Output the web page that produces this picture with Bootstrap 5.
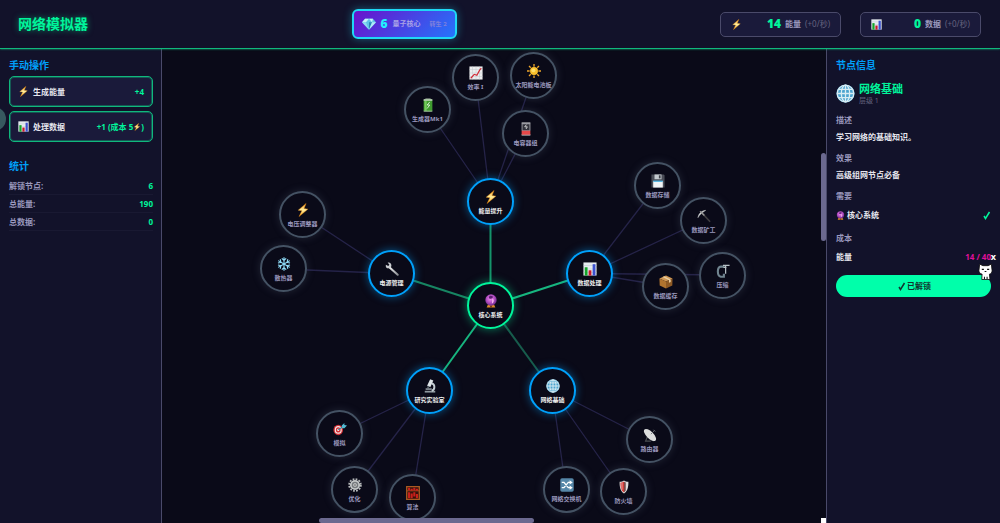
<!DOCTYPE html>
<html lang="zh-CN">
<head>
<meta charset="utf-8">
<meta name="viewport" content="width=device-width, initial-scale=1">
<title>网络模拟器</title>
<link href="https://cdn.jsdelivr.net/npm/bootstrap@5.3.0/dist/css/bootstrap.min.css" rel="stylesheet">
<style>
:root{--panel:#12122a;--deep:#0a0a18;--raised:#1a1a3a;--green:#00f59b;--green-line:#10b87d;--blue:#00a0fa;--edge:#4a4a6a;--muted:#9a98bd;--dim:#65637f}
body{background:var(--deep);color:#e6e6ee;font-family:"Noto Sans","Noto Sans CJK SC",sans-serif;font-size:8px;line-height:12px;font-weight:700}
.ico{flex:none;display:block;width:11px;height:11px}
.topbar{background:var(--panel);border-bottom:1px solid var(--green-line);box-shadow:0 0 2px #10b87d;height:49px;padding:0 19px 0 18px}
.brand{font-size:14px;line-height:20px;font-weight:700;color:var(--green);text-shadow:0 0 6px #00f59b80;margin:0}
.prestige{height:30px;gap:5px;padding:0 8px;border:2px solid #1fd8f5;border-radius:6px;background:linear-gradient(135deg,#6a11cb,#2575fc);box-shadow:0 0 8px #22d3ee66;font-size:7px;color:#a9a2e6}
.prestige .ico{width:14px;height:14px}
.prestige b{font-size:12px;color:#22f0ff}
.prestige small{font-size:6px;color:#7f80dc}
.meters{gap:19px}
.meter{height:25px;padding:0 10px;border:1px solid var(--edge);border-radius:5px;background:var(--raised);color:var(--muted)}
.meter b{font-size:12px;color:var(--green);min-width:35px;text-align:right}
.meter small{font-size:8px;font-weight:400;color:var(--dim)}
.side{background:var(--panel);padding:9px 8px 9px 9px}
.side-left{width:162px;border-right:1px solid var(--edge)}
.side-right{width:174px;border-left:1px solid var(--edge);padding-right:9px}
.side h2{font-size:10px;line-height:14px;font-weight:700;color:var(--blue);margin:0 0 4px}
.act{height:31px;padding:0 8px;border:1px solid var(--green-line);box-shadow:inset 0 0 0 1px #10b87d66;border-radius:5px;background:var(--raised);color:inherit;font-weight:700}
.act .gain{color:var(--green)}
.act .tiny{width:8px;height:8px}
.stats{margin-top:17px}
.stat{height:18px;border-bottom:1px solid #191932;color:var(--muted)}
.stat dt,.stat dd{margin:0;font-weight:700}
.stat dd{color:var(--green)}
.handle{left:-18px;top:107px;width:24px;height:24px;border:0;padding:0;border-radius:50%;background:#37595f}
.stage{min-width:0}
.tree{width:664px;height:474px}
.node{width:47px;height:47px;border:2px solid #445263;border-radius:50%;background:var(--deep);box-shadow:0 0 8px #64748b40;color:var(--muted);font-size:6px;line-height:8px;font-weight:700;white-space:nowrap;padding:2px 0 0}
.node .ico{width:14px;height:14px;margin-bottom:3px}
.node.open{border-color:var(--blue);box-shadow:0 0 9px #00a0fa80;color:#eee}
.node.core{border-color:var(--green);box-shadow:0 0 10px #00f59b80;color:#eee}
.bar{background:#6b698f;border-radius:3px}
.bar-x{left:157px;bottom:0;width:215px;height:5px}
.bar-y{right:0;top:104px;width:5px;height:88px}
.bar-corner{right:0;bottom:0;width:5px;height:5px;background:#fff}
.info-head{padding-top:5px;margin-bottom:8px}
.info-head .ico{width:19px;height:19px}
.info-head h3{font-size:11px;line-height:15px;font-weight:700;color:var(--green);margin:0}
.info-head small{display:block;font-size:7px;line-height:10px;font-weight:400;color:var(--dim)}
.info section{margin-bottom:9px}
.info h4{font-size:8px;line-height:12px;font-weight:700;color:var(--muted);margin:0 0 5px}
.info p{margin:0}
.need{gap:2px;padding:2px 0}
.need .ico{width:9px;height:9px}
.need .cost{color:#e0109a}
.done{height:22px;margin-top:10px;border:0;border-radius:11px;background:#00ffaa;color:#12352f;font-weight:700}
.pet{right:7px;top:263px;width:15px;height:17px}
.pet-close{right:4px;top:251px;border:0;padding:0;background:none;color:#fff;font-size:9px;line-height:12px;font-weight:700}
</style>
</head>
<body>
<svg width="0" height="0" class="position-absolute" aria-hidden="true">
<defs>
<linearGradient id="gold" x1="0" y1="0" x2="0" y2="1"><stop offset="0" stop-color="#f79a1c"/><stop offset=".5" stop-color="#fff0a0"/><stop offset="1" stop-color="#f39a12"/></linearGradient>
<radialGradient id="orb" cx=".45" cy=".4" r=".6"><stop offset="0" stop-color="#f08ef0"/><stop offset=".6" stop-color="#b04cc0"/><stop offset="1" stop-color="#6a2a86"/></radialGradient>
<linearGradient id="steel" x1="0" y1="0" x2="1" y2="1"><stop offset="0" stop-color="#f4f4f4"/><stop offset="1" stop-color="#8a8d92"/></linearGradient>
</defs>
<symbol id="bolt" viewBox="0 0 16 16"><path d="M11.5.5 2.5 8.2l4.2.6L3.5 15.5 13.5 7l-4.3-.7z" fill="url(#gold)" stroke="#e58a12" stroke-width=".5"/></symbol>
<symbol id="bars" viewBox="0 0 16 16"><path fill="#e6ebef" d="M.5.5h15v15H.5z"/><path stroke="#b5c2cc" stroke-width=".5" d="M.5 4h15M.5 8h15M.5 12h15"/><path fill="#15a52a" d="M2 6h3.2v9.500H2z"/><path fill="#c8182c" d="M6.400 9.500h3.200v6H6.400z"/><path fill="#3b50d0" d="M11 2.500h3.200v13H11z"/></symbol>
<symbol id="gem" viewBox="0 0 16 16"><path fill="#5fc4e8" d="M3.500 2h9L16 6l-8 8.500L0 6z"/><path fill="#c9f2fb" d="M3.500 2 0 6h4.500L8 2zM12.500 2 11.500 6 8 2z"/><path fill="#8bdcf2" d="M0 6h4.500L8 14.500z"/><path fill="#2b87b8" d="M11.500 6H8v8.500z"/><path fill="#aee9f7" d="M11.500 6H16l-8 8.500z"/></symbol>
<symbol id="globe" viewBox="0 0 16 16"><circle cx="8" cy="8" r="7.600" fill="#4aa3cf"/><g fill="none" stroke="#d8ecf3" stroke-width="1.100"><circle cx="8" cy="8" r="7"/><ellipse cx="8" cy="8" rx="3.500" ry="7"/><path d="M8 1v14M1 8h14M2 4.500h12M2 11.500h12"/></g></symbol>
<symbol id="battery" viewBox="0 0 16 16"><path fill="#9aa79a" d="M5 .5h6v2H5z"/><rect x="3" y="1.500" width="10" height="14" rx="1.500" fill="#3f9b2f"/><path fill="#74c95c" d="M4 3.500h2.500v11H4z"/><path fill="#c9d8c5" d="M3 1.500h10v1.500H3zM3 14.500h10v1H3z"/><path stroke="#e4f5de" d="M10 4.500 7 8h3l-3 4" fill="none"/></symbol>
<symbol id="trend" viewBox="0 0 16 16"><path fill="#eceeef" d="M.5.5h15v15H.5z"/><path stroke="#bcc5cb" stroke-width=".5" d="M.5 4h15M.5 8h15M.5 12h15M4 .5v15M8 .5v15M12 .5v15"/><path d="m2 14 4-4.500 3 1L12 5l2-2.500" fill="none" stroke="#d12a35" stroke-width="1.300"/></symbol>
<symbol id="sun" viewBox="0 0 16 16"><path stroke="#eda52a" stroke-width="1.500" d="M8 0v3M8 13v3M0 8h3M13 8h3M2.300 2.300l2 2M11.700 11.700l2 2M13.700 2.300l-2 2M2.300 13.700l2-2"/><circle cx="8" cy="8" r="4.500" fill="#fbc12d"/><circle cx="7.300" cy="7.200" r="2.200" fill="#ffe06b"/></symbol>
<symbol id="lowbat" viewBox="0 0 16 16"><path fill="#ddd" d="M3 .5h10v1.500H3zM3 14h10v1.500H3z"/><path fill="#33333c" stroke="#a6a6ad" stroke-width="1" d="M3.500 2h9v8h-9z"/><path fill="#e5484a" d="M3 10h10v4.500H3z"/><path d="M8.500 3 6.500 5.500h3L8 8" fill="none" stroke="#ddd"/></symbol>
<symbol id="floppy" viewBox="0 0 16 16"><path fill="#4a4d57" d="M.5.5h14l1 1v14H.5z"/><path fill="#c3c9ce" d="M4 .5h8V6H4z"/><path fill="#3d4048" d="M9 1.500h2V5H9z"/><path fill="#f0f4f6" d="M2.500 8h11v7.500h-11z"/><path fill="#49b0e0" d="M2.500 7.500h11V9h-11z"/></symbol>
<symbol id="pick" viewBox="0 0 16 16"><path d="m6 5 9 9.500" stroke="#3f3d40" stroke-width="1.800"/><path d="M1 10C1.500 5.500 5 2 10 1.500 7 3.500 3.600 6 1 10z" fill="#d4d8da" stroke="#bbb" stroke-width=".5"/><path stroke="#999" stroke-width="1.500" d="m3.500 2.500 5 5"/></symbol>
<symbol id="box" viewBox="0 0 16 16"><path fill="#d19855" d="m8 .5 7.500 3.500L8 7.500.5 4z"/><path fill="#b0742f" d="M.5 4 8 7.500v8L.8 12z"/><path fill="#8e5a24" d="M15.500 4 8 7.500v8l7.200-3.500z"/><path fill="#e9cfa2" d="m4 2.400 7.400 3.500v3l2-1V5L6 1.400z"/></symbol>
<symbol id="clamp" viewBox="0 0 16 16"><path d="M10 3H5.500C1 3.500 1 13.500 5.500 14.500H9V11" fill="none" stroke="#70848f" stroke-width="2.400"/><path d="M8 1.500h7.500M8.500 4H12M11 1v10" stroke="#b6c0c5" stroke-width="1.400"/></symbol>
<symbol id="wrench" viewBox="0 0 16 16"><path d="m5 6 9.500 8.500" stroke="url(#steel)" stroke-width="2.400" stroke-linecap="round"/><path d="M3 .7 5 3 3.700 4.700 1 3c-.8 3 1.300 4.800 4 4.100L7.200 5C8 2.500 6 0 3 .7z" fill="#c9ccd0"/></symbol>
<symbol id="snow" viewBox="0 0 16 16"><g fill="none" stroke="#8fdcf8" stroke-width="1.300"><path id="arm" d="M8 8V.3M5.500 1.500 8 4l2.500-2.500"/><use href="#arm" transform="rotate(60 8 8)"/><use href="#arm" transform="rotate(120 8 8)"/><use href="#arm" transform="rotate(180 8 8)"/><use href="#arm" transform="rotate(240 8 8)"/><use href="#arm" transform="rotate(300 8 8)"/></g></symbol>
<symbol id="crystal" viewBox="0 0 16 16"><path fill="#dc8a2c" d="M4.500 12h7l1.500 3.500H3z"/><path fill="#6b3712" d="M7 13.500h2v2H7z"/><circle cx="8" cy="6.800" r="6.500" fill="url(#orb)"/><path fill="#5c1f72" d="M6 2.500c2-1 5 0 4 1.500S6 6 5.500 4.500z"/><path fill="#f6b7ee" d="M9.500 5.500c2 0 2.500 4-.5 5.500z"/></symbol>
<symbol id="scope" viewBox="0 0 16 16"><path fill="#8e989f" d="M2 13.500h12v2H2z"/><path d="M10 5c4 1 4 7 0 8.500" fill="none" stroke="#c3ccd2" stroke-width="2.200"/><path d="m10 1-3.500 7.500" stroke="#dde3e6" stroke-width="4"/><path d="m6.500 8-1 2.500" stroke="#566068" stroke-width="2"/><path stroke="#aab3b9" stroke-width="1.500" d="M3 11.500h7"/></symbol>
<symbol id="dart" viewBox="0 0 16 16"><ellipse cx="6" cy="9" rx="5.500" ry="6" fill="#d22e34"/><ellipse cx="6" cy="9" rx="4" ry="4.400" fill="#f3e9e8"/><ellipse cx="6" cy="9" rx="2.700" ry="3" fill="#d22e34"/><circle cx="6" cy="9" r="1.200" fill="#fff"/><path d="m6 9 7-5" stroke="#2f8599" stroke-width="1.300"/><path fill="#52bbd2" d="m10 4 3-3v2.500l3 .5-3 3h-2.500z"/></symbol>
<symbol id="gear" viewBox="0 0 16 16"><circle cx="8" cy="8" r="6.700" fill="none" stroke="#b7babb" stroke-width="2" stroke-dasharray="2 1.500"/><circle cx="8" cy="8" r="4.800" fill="#777b7e" stroke="#c4c7c8" stroke-width="2"/><circle cx="8" cy="8" r="2" fill="#dadcdc"/><circle cx="8" cy="8" r=".9" fill="#333"/></symbol>
<symbol id="abacus" viewBox="0 0 16 16"><path fill="#35100c" stroke="#a95a22" stroke-width="1.500" d="M.8.8h14.400v14.400H.8z"/><path stroke="#a95a22" d="M1 5.500h14"/><g stroke="#c8201b" stroke-width="2.400"><path d="M3.500 2v3M6.500 3v2.500M9.500 2v3M12.500 3v2.500M3.500 7v7M6.500 8.500V14M9.500 7v5M12.500 9v5"/></g></symbol>
<symbol id="shuffle" viewBox="0 0 16 16"><rect x=".3" y=".3" width="15.400" height="15.400" rx="2" fill="#5687a8"/><path d="M2 5h2.500l5 6H12M2 11h2.500l5-6H12" fill="none" stroke="#fff" stroke-width="1.500"/><path fill="#fff" d="m11 2.500 3.500 2.500L11 7.500zM11 8.500l3.500 2.500-3.500 2.500z"/></symbol>
<symbol id="shield" viewBox="0 0 16 16"><path fill="#dedede" d="M3 2C5 2 7 1.500 8 .5 9 1.500 11 2 13 2c.3 7-1.500 11-5 13.500C4.500 13 2.700 9 3 2z"/><path fill="#d33a36" d="M4 3C5.500 3 7 2.500 8 1.800v12.500C5 12 4 9 4 3z"/><path fill="#7b4b4a" d="M8 1.800c1 .7 1.500 1 2 1.100V12l-2 2.300z"/><path stroke="#fff" stroke-width=".6" d="M5.700 3v8"/></symbol>
<symbol id="dish" viewBox="0 0 16 16"><path d="m5 10-2 5h6M12 12v3" fill="none" stroke="#4a4e52" stroke-width="1.400"/><ellipse cx="8" cy="8" rx="9" ry="4" transform="rotate(45 8 8)" fill="#dcdddd"/><path d="m9 7 4-4M12 2l2 2" stroke="#6b6f73" stroke-width="1"/></symbol>
<symbol id="cat" viewBox="0 0 14 16"><path d="M1.500 1 4.500 2.500h5L12.500 1l.7 6c0 2-1 3-2.500 3.500l.5 5H3.500l.3-5C2 10 .8 9 .8 7z" fill="#fff" stroke="#111" stroke-width=".8"/><path stroke="#111" d="M3.500 6h2M8.500 6h2M6.200 8h1.600M6 13v2M8.500 13v2"/></symbol>
</svg>

<div class="d-flex flex-column min-vh-100 position-relative overflow-hidden">
<header class="topbar position-relative z-1 d-flex align-items-center justify-content-between">
  <h1 class="brand">网络模拟器</h1>
  <div class="prestige d-flex align-items-center"><svg class="ico"><use href="#gem"/></svg><b>6</b><span>量子核心</span><small class="ms-1">转生 2</small></div>
  <div class="meters d-flex">
    <div class="meter d-flex align-items-center gap-1"><svg class="ico"><use href="#bolt"/></svg><b>14</b><span>能量</span><small>(+0/秒)</small></div>
    <div class="meter d-flex align-items-center gap-1"><svg class="ico"><use href="#bars"/></svg><b>0</b><span>数据</span><small>(+0/秒)</small></div>
  </div>
</header>

<div class="d-flex flex-grow-1">
  <aside class="side side-left flex-shrink-0">
    <h2>手动操作</h2>
    <div class="d-grid gap-1">
      <button type="button" class="act d-flex align-items-center"><svg class="ico me-1"><use href="#bolt"/></svg><span>生成能量</span><span class="gain ms-auto">+4</span></button>
      <button type="button" class="act d-flex align-items-center"><svg class="ico me-1"><use href="#bars"/></svg><span>处理数据</span><span class="gain ms-auto d-flex align-items-center">+1 (成本 5<svg class="ico tiny"><use href="#bolt"/></svg>)</span></button>
    </div>
    <div class="stats">
      <h2>统计</h2>
      <dl class="m-0">
        <div class="stat d-flex justify-content-between align-items-center"><dt>解锁节点:</dt><dd>6</dd></div>
        <div class="stat d-flex justify-content-between align-items-center"><dt>总能量:</dt><dd>190</dd></div>
        <div class="stat d-flex justify-content-between align-items-center"><dt>总数据:</dt><dd>0</dd></div>
      </dl>
    </div>
  </aside>

  <main class="stage flex-grow-1 position-relative overflow-hidden d-flex justify-content-center">
    <div class="tree position-relative flex-shrink-0">
      <svg class="position-absolute top-0 start-0 w-100 h-100" viewBox="0 0 664 474" aria-hidden="true">
        <g stroke="#252348" stroke-width="1.300">
          <path d="M328.500 152.500 265.500 60.500M328.500 152.500 313.500 29M328.500 152.500 371.500 26.500M328.500 152.500 363.500 85"/>
          <path d="M427.500 224.500 495 136.500M427.500 224.500 541 171.500M427.500 224.500 503.500 237M427.500 224.500 561 226"/>
          <path d="M229.500 224.500 140 165.500M229.500 224.500 121.500 220"/>
          <path d="M267.500 341 177.500 384.500M267.500 341 192.500 440M267.500 341 250 449"/>
          <path d="M390 341 404 440.500M390 341 461.500 443M390 341 487 390.500"/>
        </g>
        <g stroke-width="2">
          <path stroke="#15946a" d="M328.500 256.500V152.500"/><path stroke="#17b57f" d="M328.500 256.500 427.500 224.500"/><path stroke="#178562" d="M328.500 256.500 229.500 224.500"/><path stroke="#17b57f" d="M328.500 256.500 267.500 341"/><path stroke="#175c4c" d="M328.500 256.500 390 341"/>
        </g>
      </svg>
      <button type="button" class="node core position-absolute d-flex flex-column align-items-center justify-content-center" style="left:305px;top:233px"><svg class="ico"><use href="#crystal"/></svg>核心系统</button>
      <button type="button" class="node open position-absolute d-flex flex-column align-items-center justify-content-center" style="left:305px;top:129px"><svg class="ico"><use href="#bolt"/></svg>能量提升</button>
      <button type="button" class="node open position-absolute d-flex flex-column align-items-center justify-content-center" style="left:404px;top:201px"><svg class="ico"><use href="#bars"/></svg>数据处理</button>
      <button type="button" class="node open position-absolute d-flex flex-column align-items-center justify-content-center" style="left:367px;top:318px"><svg class="ico"><use href="#globe"/></svg>网络基础</button>
      <button type="button" class="node open position-absolute d-flex flex-column align-items-center justify-content-center" style="left:244px;top:318px"><svg class="ico"><use href="#scope"/></svg>研究实验室</button>
      <button type="button" class="node open position-absolute d-flex flex-column align-items-center justify-content-center" style="left:206px;top:201px"><svg class="ico"><use href="#wrench"/></svg>电源管理</button>
      <button type="button" class="node position-absolute d-flex flex-column align-items-center justify-content-center" style="left:242px;top:37px"><svg class="ico"><use href="#battery"/></svg>生成器Mk1</button>
      <button type="button" class="node position-absolute d-flex flex-column align-items-center justify-content-center" style="left:290px;top:5px"><svg class="ico"><use href="#trend"/></svg>效率 I</button>
      <button type="button" class="node position-absolute d-flex flex-column align-items-center justify-content-center" style="left:348px;top:3px"><svg class="ico"><use href="#sun"/></svg>太阳能电池板</button>
      <button type="button" class="node position-absolute d-flex flex-column align-items-center justify-content-center" style="left:340px;top:61px"><svg class="ico"><use href="#lowbat"/></svg>电容器组</button>
      <button type="button" class="node position-absolute d-flex flex-column align-items-center justify-content-center" style="left:472px;top:113px"><svg class="ico"><use href="#floppy"/></svg>数据存储</button>
      <button type="button" class="node position-absolute d-flex flex-column align-items-center justify-content-center" style="left:518px;top:148px"><svg class="ico"><use href="#pick"/></svg>数据矿工</button>
      <button type="button" class="node position-absolute d-flex flex-column align-items-center justify-content-center" style="left:480px;top:214px"><svg class="ico"><use href="#box"/></svg>数据缓存</button>
      <button type="button" class="node position-absolute d-flex flex-column align-items-center justify-content-center" style="left:537px;top:203px"><svg class="ico"><use href="#clamp"/></svg>压缩</button>
      <button type="button" class="node position-absolute d-flex flex-column align-items-center justify-content-center" style="left:117px;top:142px"><svg class="ico"><use href="#bolt"/></svg>电压调整器</button>
      <button type="button" class="node position-absolute d-flex flex-column align-items-center justify-content-center" style="left:98px;top:196px"><svg class="ico"><use href="#snow"/></svg>散热器</button>
      <button type="button" class="node position-absolute d-flex flex-column align-items-center justify-content-center" style="left:154px;top:361px"><svg class="ico"><use href="#dart"/></svg>模拟</button>
      <button type="button" class="node position-absolute d-flex flex-column align-items-center justify-content-center" style="left:169px;top:417px"><svg class="ico"><use href="#gear"/></svg>优化</button>
      <button type="button" class="node position-absolute d-flex flex-column align-items-center justify-content-center" style="left:227px;top:425px"><svg class="ico"><use href="#abacus"/></svg>算法</button>
      <button type="button" class="node position-absolute d-flex flex-column align-items-center justify-content-center" style="left:381px;top:417px"><svg class="ico"><use href="#shuffle"/></svg>网络交换机</button>
      <button type="button" class="node position-absolute d-flex flex-column align-items-center justify-content-center" style="left:438px;top:419px"><svg class="ico"><use href="#shield"/></svg>防火墙</button>
      <button type="button" class="node position-absolute d-flex flex-column align-items-center justify-content-center" style="left:464px;top:367px"><svg class="ico"><use href="#dish"/></svg>路由器</button>
    </div>
    <div class="bar bar-x position-absolute"></div>
    <div class="bar bar-y position-absolute"></div>
    <div class="bar-corner position-absolute"></div>
  </main>

  <aside class="side side-right info flex-shrink-0">
    <h2>节点信息</h2>
    <div class="info-head d-flex align-items-center gap-1"><svg class="ico"><use href="#globe"/></svg><div><h3>网络基础</h3><small>层级 1</small></div></div>
    <section><h4>描述</h4><p>学习网络的基础知识。</p></section>
    <section><h4>效果</h4><p>高级组网节点必备</p></section>
    <section><h4>需要</h4><div class="need d-flex align-items-center"><svg class="ico"><use href="#crystal"/></svg><span>核心系统</span><svg class="ico ms-auto" viewBox="0 0 9 9"><path d="m2 5 1.500 2.500L7.500 1" fill="none" stroke="#00f59b" stroke-width="1.500"/></svg></div></section>
    <section><h4>成本</h4><div class="need d-flex justify-content-between"><span>能量</span><span class="cost">14 / 40</span></div></section>
    <button type="button" class="done w-100 d-flex align-items-center justify-content-center"><svg class="ico" viewBox="0 0 11 11"><path d="m3 6 1.500 2.500L8.500 2" fill="none" stroke="#12352f" stroke-width="1.500"/></svg>已解锁</button>
  </aside>
</div>

<button type="button" class="handle position-absolute" aria-label="展开"></button>
<button type="button" class="pet-close position-absolute">x</button>
<svg class="pet position-absolute" aria-hidden="true"><use href="#cat"/></svg>
</div>
<script src="https://cdn.jsdelivr.net/npm/bootstrap@5.3.0/dist/js/bootstrap.bundle.min.js"></script>
</body>
</html>
